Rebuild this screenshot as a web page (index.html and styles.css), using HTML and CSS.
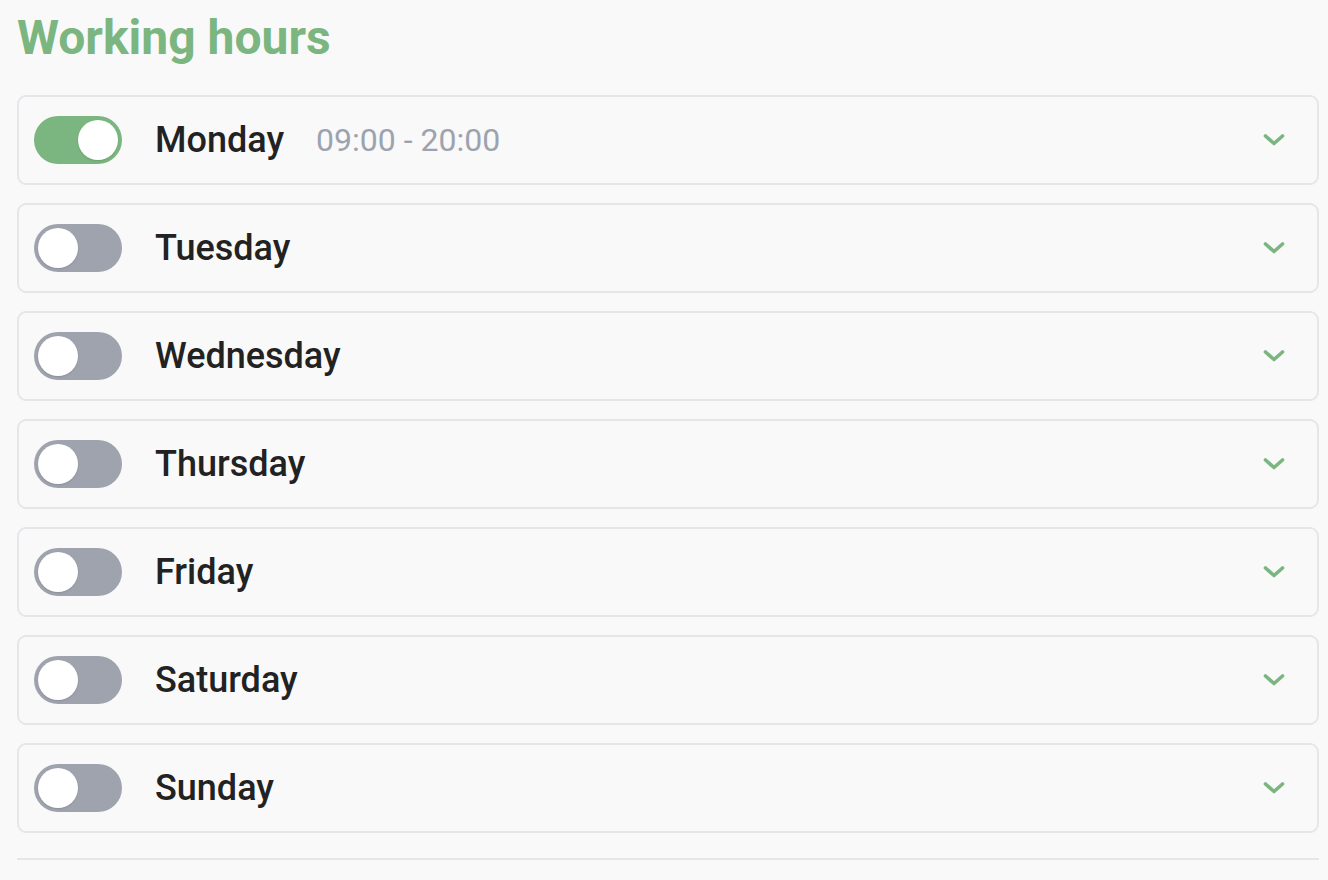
FILE: index.html
```html
<!DOCTYPE html>
<html lang="en">
<head>
<meta charset="utf-8">
<title>Working hours</title>
<link rel="stylesheet" href="styles.css">
</head>
<body>
<main class="page">
  <h1 class="title">Working hours</h1>
  <ul class="days">
    <li class="day">
      <span class="toggle on"><span class="knob"></span></span>
      <span class="day-name">Monday</span>
      <span class="day-time">09:00 - 20:00</span>
      <svg class="chev" viewBox="0 0 24 14" width="24" height="14"><path d="M3.5 3 L12 10.5 L20.5 3" fill="none" stroke="#7bb57f" stroke-width="3.6" stroke-linecap="round" stroke-linejoin="round"/></svg>
    </li>
    <li class="day">
      <span class="toggle"><span class="knob"></span></span>
      <span class="day-name">Tuesday</span>
      <svg class="chev" viewBox="0 0 24 14" width="24" height="14"><path d="M3.5 3 L12 10.5 L20.5 3" fill="none" stroke="#7bb57f" stroke-width="3.6" stroke-linecap="round" stroke-linejoin="round"/></svg>
    </li>
    <li class="day">
      <span class="toggle"><span class="knob"></span></span>
      <span class="day-name">Wednesday</span>
      <svg class="chev" viewBox="0 0 24 14" width="24" height="14"><path d="M3.5 3 L12 10.5 L20.5 3" fill="none" stroke="#7bb57f" stroke-width="3.6" stroke-linecap="round" stroke-linejoin="round"/></svg>
    </li>
    <li class="day">
      <span class="toggle"><span class="knob"></span></span>
      <span class="day-name">Thursday</span>
      <svg class="chev" viewBox="0 0 24 14" width="24" height="14"><path d="M3.5 3 L12 10.5 L20.5 3" fill="none" stroke="#7bb57f" stroke-width="3.6" stroke-linecap="round" stroke-linejoin="round"/></svg>
    </li>
    <li class="day">
      <span class="toggle"><span class="knob"></span></span>
      <span class="day-name">Friday</span>
      <svg class="chev" viewBox="0 0 24 14" width="24" height="14"><path d="M3.5 3 L12 10.5 L20.5 3" fill="none" stroke="#7bb57f" stroke-width="3.6" stroke-linecap="round" stroke-linejoin="round"/></svg>
    </li>
    <li class="day">
      <span class="toggle"><span class="knob"></span></span>
      <span class="day-name">Saturday</span>
      <svg class="chev" viewBox="0 0 24 14" width="24" height="14"><path d="M3.5 3 L12 10.5 L20.5 3" fill="none" stroke="#7bb57f" stroke-width="3.6" stroke-linecap="round" stroke-linejoin="round"/></svg>
    </li>
    <li class="day">
      <span class="toggle"><span class="knob"></span></span>
      <span class="day-name">Sunday</span>
      <svg class="chev" viewBox="0 0 24 14" width="24" height="14"><path d="M3.5 3 L12 10.5 L20.5 3" fill="none" stroke="#7bb57f" stroke-width="3.6" stroke-linecap="round" stroke-linejoin="round"/></svg>
    </li>
  </ul>
  <hr class="rule">
</main>
</body>
</html>
```
FILE: styles.css
```css
* { box-sizing: border-box; }
html, body { margin: 0; padding: 0; background: #f9f9f9; }
body { font-family: Roboto, "Liberation Sans", sans-serif; color: #222; }

.page { padding: 10px 9px 0 17px; }

.title {
  margin: 0;
  font-size: 48px;
  line-height: 56px;
  font-weight: 700;
  color: #7bb57f;
}

.days {
  list-style: none;
  margin: 29px 0 0 0;
  padding: 0;
  display: flex;
  flex-direction: column;
  gap: 18px;
}

.day {
  display: flex;
  align-items: center;
  height: 90px;
  padding: 0 31px 0 15px;
  border: 2px solid #e6e6ea;
  border-radius: 9px;
  background: #f9f9f9;
}

.toggle {
  position: relative;
  flex: none;
  width: 88px;
  height: 48px;
  border-radius: 24px;
  background: #9ea3ae;
  margin-right: 33px;
}
.toggle.on { background: #7bb57f; }

.knob {
  position: absolute;
  top: 4px;
  left: 4px;
  width: 40px;
  height: 40px;
  border-radius: 50%;
  background: #fff;
  box-shadow: 0 1px 2px rgba(0,0,0,0.12);
}
.toggle.on .knob { left: 44px; }

.day-name {
  font-size: 36px;
  font-weight: 500;
  color: #222;
}

.day-time {
  margin-left: 32px;
  font-size: 32px;
  font-weight: 400;
  color: #9ca3af;
}

.chev { margin-left: auto; flex: none; }

.rule {
  margin: 25px 0 0 0;
  border: 0;
  height: 2px;
  background: #e6e6ea;
}
```
